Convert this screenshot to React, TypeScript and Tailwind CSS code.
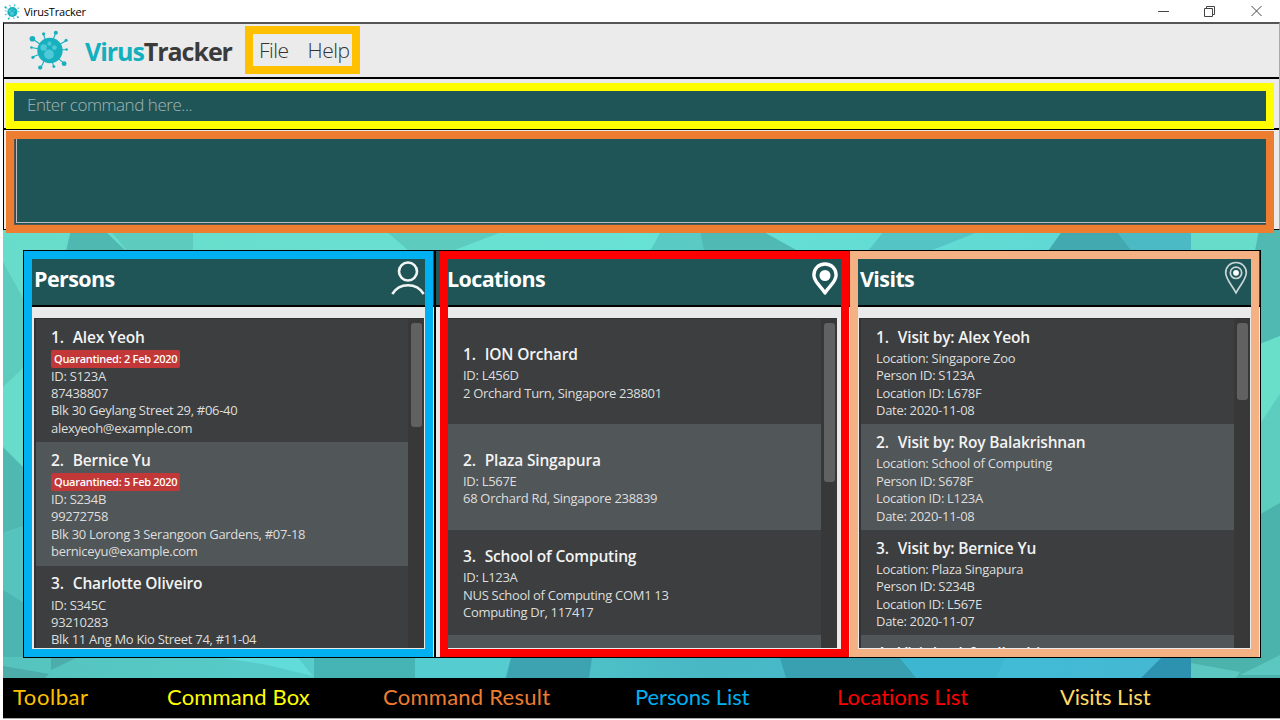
import React from "react";

type Entry = { name: string; tag?: string; lines: string[] };

const persons: Entry[] = [
  {
    name: "Alex Yeoh",
    tag: "Quarantined: 2 Feb 2020",
    lines: ["ID: S123A", "87438807", "Blk 30 Geylang Street 29, #06-40", "alexyeoh@example.com"],
  },
  {
    name: "Bernice Yu",
    tag: "Quarantined: 5 Feb 2020",
    lines: ["ID: S234B", "99272758", "Blk 30 Lorong 3 Serangoon Gardens, #07-18", "berniceyu@example.com"],
  },
  { name: "Charlotte Oliveiro", lines: ["ID: S345C", "93210283", "Blk 11 Ang Mo Kio Street 74, #11-04"] },
];

const locations: Entry[] = [
  { name: "ION Orchard", lines: ["ID: L456D", "2 Orchard Turn, Singapore 238801"] },
  { name: "Plaza Singapura", lines: ["ID: L567E", "68 Orchard Rd, Singapore 238839"] },
  { name: "School of Computing", lines: ["ID: L123A", "NUS School of Computing COM1 13", "Computing Dr, 117417"] },
  { name: "", lines: [] },
];

const visits: Entry[] = [
  { name: "Visit by: Alex Yeoh", lines: ["Location: Singapore Zoo", "Person ID: S123A", "Location ID: L678F", "Date: 2020-11-08"] },
  { name: "Visit by: Roy Balakrishnan", lines: ["Location: School of Computing", "Person ID: S678F", "Location ID: L123A", "Date: 2020-11-08"] },
  { name: "Visit by: Bernice Yu", lines: ["Location: Plaza Singapura", "Person ID: S234B", "Location ID: L567E", "Date: 2020-11-07"] },
  { name: "Visit by: Irfan Ibrahim", lines: [] },
];

function Virus({ className }: { className: string }) {
  return (
    <svg viewBox="0 0 42 42" className={className}>
      <g stroke="#17b0bf" strokeWidth="1.1" fill="#17b0bf">
        <path d="M21 21 4 9M21 21 15 3.500M21 21 28 2.500M21 21 38.500 11M21 21 40 20M21 21 36 34M21 21 26 38M21 21 12.500 39M21 21 3.500 28M21 21 2.500 18" />
        <g stroke="none">
          <circle cx="4" cy="9" r="2.900" />
          <circle cx="15.500" cy="4" r="1.600" />
          <circle cx="28" cy="2.800" r="2.100" />
          <circle cx="38.500" cy="10.500" r="1.600" />
          <circle cx="39" cy="20" r="1.300" />
          <circle cx="36.500" cy="34.500" r="2.500" />
          <circle cx="26" cy="37.500" r="1.500" />
          <circle cx="12" cy="38.500" r="2.200" />
          <circle cx="4.500" cy="28" r="1.600" />
          <circle cx="3" cy="18" r="1.300" />
          <circle cx="22" cy="21" r="13" />
        </g>
      </g>
      <g fill="#4fc9d8">
        <circle cx="15.500" cy="18" r="3.300" />
        <circle cx="21" cy="25" r="5" />
        <circle cx="21.500" cy="14" r="2.200" />
        <circle cx="26.500" cy="18" r="2.500" />
      </g>
    </svg>
  );
}

function PersonIcon() {
  return (
    <svg viewBox="0 0 34 34" className="h-[34px] w-[34px]" fill="none" stroke="#f2f5f5" strokeWidth="2.6">
      <circle cx="17" cy="10.500" r="9" />
      <path d="M1.300 33a18.500 18.500 0 0 1 31.400 0" />
    </svg>
  );
}

function PinIcon() {
  return (
    <svg viewBox="0 0 26 33" className="h-[33px] w-[26px]">
      <path d="M13 2C6.500 2 1.900 6.800 1.900 13c0 7.200 7.600 11.700 11.100 18 3.500-6.300 11.100-10.800 11.100-18C24.100 6.800 19.500 2 13 2Z" fill="none" stroke="#fff" strokeWidth="3.400" strokeLinejoin="round" />
      <circle cx="13" cy="13.500" r="5.500" fill="#fff" />
    </svg>
  );
}

function ThinPinIcon() {
  return (
    <svg viewBox="0 0 24 34" className="h-[34px] w-[24px]" fill="none" stroke="#c9d5d6" strokeWidth="1.700">
      <path d="M12 1.500C6 1.500 1.700 6 1.700 11.800 1.700 18 7.500 23.500 12 31.800 16.500 23.500 22.300 18 22.300 11.800 22.300 6 18 1.500 12 1.500Z" />
      <circle cx="12" cy="11.800" r="5.700" />
      <circle cx="12" cy="11.800" r="2.900" fill="#fff" stroke="none" />
    </svg>
  );
}

function Background() {
  return (
    <svg viewBox="3 230 1277 448" className="absolute top-[230px] left-[3px] h-[448px] w-[1277px]" preserveAspectRatio="none">
      <defs>
        <linearGradient id="base" x1="0" y1="0" x2="1" y2="0">
          <stop offset="0" stopColor="#68dcca" />
          <stop offset="0.500" stopColor="#68e2d5" />
          <stop offset="1" stopColor="#5bd3d3" />
        </linearGradient>
        <linearGradient id="low" x1="0" y1="0" x2="1" y2="0">
          <stop offset="0" stopColor="#56c3bd" />
          <stop offset="0.300" stopColor="#56cfcf" />
          <stop offset="0.550" stopColor="#48b8c4" />
          <stop offset="0.800" stopColor="#42bbd6" />
          <stop offset="1" stopColor="#48b5d0" />
        </linearGradient>
      </defs>
      <path fill="url(#base)" d="M3 230h1277v448H3z" />
      <path fill="#5dcbbd" d="M3 262 24 300V367L3 387zM110 230h83v21h-66z" />
      <path fill="#4eb8b1" d="M71 230h33l22 21H66zM3 447l21 21v58L3 533zM385 230h98l-43 21h-28z" />
      <path fill="#5dcbbd" d="M385 230h122l-55 21h-43z" />
      <path fill="#50b9b3" d="M662 230h98l38 21H651z" />
      <path fill="#5acbc4" d="M662 230h38l4 21h-54z" />
      <path fill="#54c4c5" d="M885 230h98l-53 21h-62z" />
      <path fill="#43a9b1" d="M1063 230h53l16 21h-84z" />
      <path fill="#4cbac4" d="M1116 230h75v21h-59z" />
      <path fill="#68dcca" d="M1191 230h69l-5 21h-64z" />
      <path fill="#50b9b2" d="M1259 230h21v106l-20 8v-93h-5z" />
      <path fill="#69dfca" d="M1260 344l20-8v58l-20 30z" />
      <path fill="#5dcdbf" d="M1260 424l20-30v109l-20 50z" />
      <path fill="#56c3bd" d="M3 533l21-7v152H3z" />
      <path fill="#4db5b1" d="M3 590l21 13v55l-21 8z" />
      <path fill="url(#low)" d="M3 657h1257V553l20-50v175H3z" />
      <path fill="#4cadaa" d="M3 666l46 8-4 4H3zM51 658h25l-25 12z" />
      <path fill="#62dcda" d="M222 658h76l15 18-50-12z" />
      <path fill="#46b3b5" d="M314 658h101v20H314z" />
      <path fill="#54ccd0" d="M415 658h96l-7 20h-89z" />
      <path fill="#3da3b0" d="M511 658h81l-3 20h-83z" />
      <path fill="#39a0b1" d="M780 658h120l18 20H786z" />
      <path fill="#3db7d1" d="M900 658h105l-9 20h-80z" />
      <path fill="#2c92b0" d="M1161 658h30v20h-50z" />
      <path fill="#4cb3ac" d="M1191 553l89-50v175h-89z" />
      <path fill="#5bc7c0" d="M1191 663l49 9-4 6h-45zM1260 665l20-10v20h-40z" />
    </svg>
  );
}

function Row({ entry, index, size, align }: { entry: Entry; index: number; size: string; align: string }) {
  return (
    <div className={`flex shrink-0 flex-col items-start pl-[15px] ${size} ${align} ${index % 2 ? "bg-[#515658]" : "bg-[#3c3e3f]"}`}>
      <div className="flex h-[22px] items-center gap-[9px] pt-px text-[15.500px] font-semibold tracking-[-0.180px] whitespace-nowrap text-[#f3f3f3]">
        {entry.name && <span>{index + 1}.</span>}
        <span>{entry.name}</span>
      </div>
      {entry.tag && (
        <span className="mt-[2px] flex h-[17.500px] items-center rounded-[2px] bg-[#c23838] px-[3px] text-[11px] font-semibold tracking-[-0.28px] whitespace-nowrap text-white">
          {entry.tag}
        </span>
      )}
      <div className={entry.tag ? "" : "mt-[2px]"}>
        {entry.lines.map((line) => (
          <div key={line} className="h-[17.400px] text-[13px] leading-[17.400px] tracking-[-0.3px] whitespace-nowrap text-[#dedede]">
            {line}
          </div>
        ))}
      </div>
    </div>
  );
}

type PanelProps = {
  title: string;
  icon: React.ReactNode;
  entries: Entry[];
  panel: string;
  head: string;
  list: string;
  thumb: string;
  size: string;
  align: string;
};

function Panel({ title, icon, entries, panel, head, list, thumb, size, align }: PanelProps) {
  return (
    <section className={`flex h-full flex-col bg-[#eaeaea] ${panel}`}>
      <header className={`flex h-[56px] shrink-0 items-center justify-between border-b-2 border-black bg-[#205558] ${head}`}>
        <h2 className="pt-[2px] text-[21.500px] leading-none font-bold tracking-[-0.600px] text-white">{title}</h2>
        {icon}
      </header>
      <div className={`mt-[11px] flex h-[330px] overflow-hidden border-t border-l-2 border-[#323334] bg-[#383838] ${list}`}>
        <div className="flex grow flex-col overflow-hidden">
          {entries.map((entry, i) => (
            <Row key={i} entry={entry} index={i} size={size} align={align} />
          ))}
        </div>
        <div className="flex w-[16px] shrink-0 justify-center pt-[4px]">
          <div className={`w-[11px] rounded-[3px] bg-[#616161] ${thumb}`} />
        </div>
      </div>
    </section>
  );
}

const labels = [
  { text: "Toolbar", style: "w-[154px] pl-[10px] tracking-[0.550px] text-[#ffc000]" },
  { text: "Command Box", style: "w-[216px] pl-[10px] tracking-[0.150px] text-[#ffff00]" },
  { text: "Command Result", style: "w-[252px] pl-[10px] tracking-[0.250px] text-[#ed7d31]" },
  { text: "Persons List", style: "w-[202px] pl-[10px] tracking-[-0.100px] text-[#00b0f0]" },
  { text: "Locations List", style: "w-[223px] pl-[10px] tracking-[-0.020px] text-[#ff0000]" },
  { text: "Visits List", style: "w-[230px] pl-[10px] tracking-[-0.150px] text-[#ffd966]" },
];

export default function App() {
  return (
    <div className="relative flex h-[720px] w-[1280px] flex-col overflow-hidden bg-white font-['Open_Sans','Noto_Sans',sans-serif]">
      <Background />
      <div className="flex h-[22px] shrink-0 items-center justify-between bg-white pr-[17px] pl-[4px]">
        <div className="flex items-center gap-[4px] pt-[1px]">
          <Virus className="h-[16px] w-[16px]" />
          <span className="pt-px text-[11px] tracking-[-0.2px] text-black">VirusTracker</span>
        </div>
        <svg viewBox="0 0 106 12" className="h-[12px] w-[106px]" fill="none" stroke="#444" strokeWidth="1">
          <path d="M1 6.500h11" />
          <path d="M47.500 3.500h8v8h-8zM49.500 3.500v-2h8v8h-2" />
          <path d="m94.500 1 10 10m0-10-10 10" />
        </svg>
      </div>

      <div className="relative ml-[3px] flex h-[208px] shrink-0 flex-col border border-t-2 border-t-[#555] border-r-[#aaa] border-b-black border-l-black bg-[#ebebeb]">
        <div className="flex h-[53px] shrink-0 items-center pl-[24px]">
          <Virus className="h-[41px] w-[42px]" />
          <div className="ml-[15px] w-[148px] pt-[2px] text-[25px] leading-none font-bold tracking-[-1.050px] text-[#3b3b3b]">
            <span className="text-[#12b0be]">Virus</span>Tracker
          </div>
          <div className="ml-[26px] flex gap-[19px] text-[21px] leading-none font-light tracking-[-0.5px] text-[#333]">
            <span>File</span>
            <span>Help</span>
          </div>
        </div>
        <div className="flex h-[53px] shrink-0 items-start border-y-2 border-black pt-[12px] pr-[12px] pl-[10px]">
          <div className="flex h-[30px] grow items-center bg-[#205558] pb-[3px] pl-[13px] text-[17px] font-light tracking-[-0.450px] text-[#a3b5b5]">
            Enter command here...
          </div>
        </div>
        <div className="flex grow items-start pt-[8px] pr-[12px] pl-[10px]">
          <div className="h-[87px] grow border-b border-l border-[#555] bg-[#205558] pb-px pl-px">
            <div className="h-full border-b border-l border-[#bbb]" />
          </div>
        </div>
      </div>

      <div className="relative mt-[20px] ml-[23px] flex h-[408px] w-[1238px] shrink-0 border border-black bg-[#eaeaea]">
        <Panel
          title="Persons"
          icon={<PersonIcon />}
          entries={persons}
          panel="w-[412px] border-r-2 border-black"
          head="pr-[9px] pl-[10px]"
          list="ml-[10px] w-[390px]"
          thumb="h-[104px]"
          size="h-[123.300px]"
          align="pt-[7px]"
        />
        <Panel
          title="Locations"
          icon={<PinIcon />}
          entries={locations}
          panel="w-[413px] border-r border-black"
          head="pr-[10px] pl-[11px]"
          list="ml-[10px] w-[391px]"
          thumb="h-[159px]"
          size="h-[105.400px]"
          align="justify-center pt-[2px]"
        />
        <Panel
          title="Visits"
          icon={<ThinPinIcon />}
          entries={visits}
          panel="grow"
          head="pr-[12px] pl-[11px]"
          list="ml-[10px] w-[391px]"
          thumb="h-[77px]"
          size="h-[105.400px]"
          align="pt-[7px]"
        />
      </div>

      <div className="relative mt-[20px] ml-[3px] flex h-[41px] shrink-0 items-center border-b border-[#aaa] bg-black pb-[3px] font-[Lato,sans-serif] text-[22px]">
        {labels.map((label) => (
          <span key={label.text} className={`shrink-0 whitespace-nowrap ${label.style}`}>
            {label.text}
          </span>
        ))}
      </div>

      <div className="absolute top-[26px] left-[245px] h-[48px] w-[115px] border-8 border-[#ffc000]" />
      <div className="absolute top-[83px] left-[6px] h-[46px] w-[1268px] border-8 border-[#ffff00]" />
      <div className="absolute top-[131px] left-[6px] h-[102px] w-[1268px] border-8 border-[#ed7d31]" />
      <div className="absolute top-[251px] left-[24px] h-[406px] w-[409px] border-8 border-[#00b0f0]" />
      <div className="absolute top-[251px] left-[440px] h-[406px] w-[409px] border-8 border-[#ff0000]" />
      <div className="absolute top-[251px] left-[850px] h-[406px] w-[409px] border-8 border-[#f4b183]" />
    </div>
  );
}
